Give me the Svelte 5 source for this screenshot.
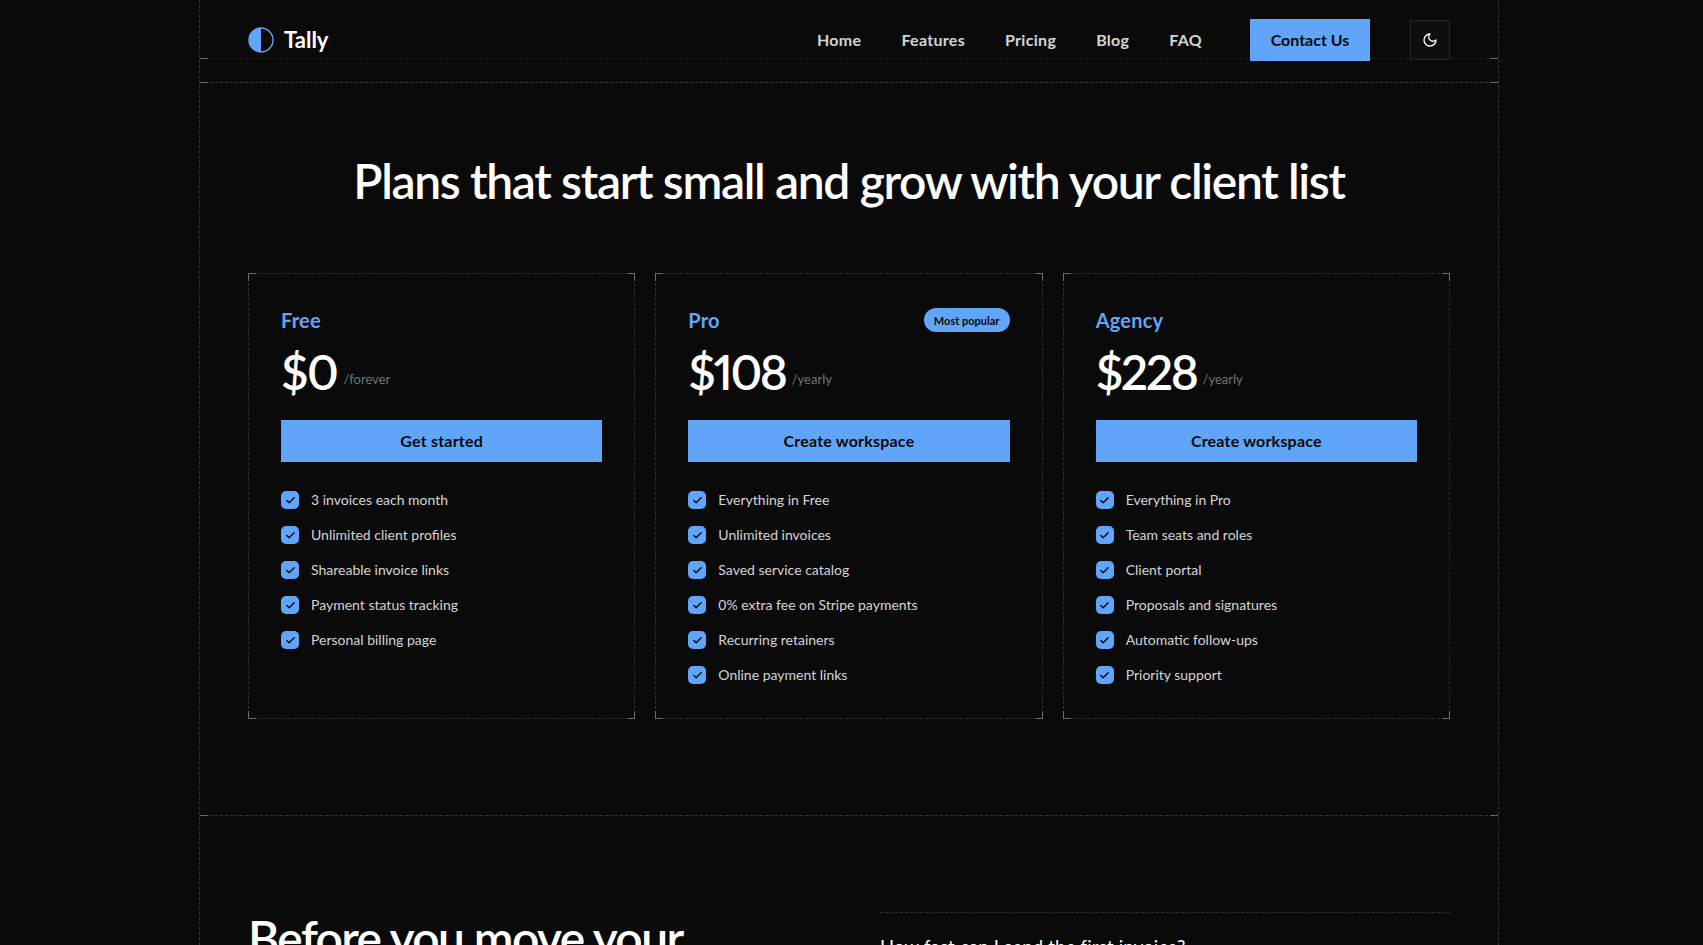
<script>
  const plans = [
    { name: 'Free', price: '$0', per: '/forever', cta: 'Get started', items: ['3 invoices each month', 'Unlimited client profiles', 'Shareable invoice links', 'Payment status tracking', 'Personal billing page'] },
    { name: 'Pro', price: '$108', per: '/yearly', cta: 'Create workspace', badge: 'Most popular', items: ['Everything in Free', 'Unlimited invoices', 'Saved service catalog', '0% extra fee on Stripe payments', 'Recurring retainers', 'Online payment links'] },
    { name: 'Agency', price: '$228', per: '/yearly', cta: 'Create workspace', items: ['Everything in Pro', 'Team seats and roles', 'Client portal', 'Proposals and signatures', 'Automatic follow-ups', 'Priority support'] }
  ];
  const links = ['Home', 'Features', 'Pricing', 'Blog', 'FAQ'];
</script>

<div class="page">
  <header class="head">
    <nav class="nav">
      <a class="brand" href="#top">
        <svg class="logo" viewBox="0 0 26 26" aria-hidden="true">
          <circle cx="13" cy="13" r="12" fill="none" stroke="#60a5fa" stroke-width="1.4" />
          <path d="M13 1a12 12 0 0 0 0 24z" fill="#60a5fa" />
        </svg>
        <span>Tally</span>
      </a>
      <div class="links">
        {#each links as l}<a href="#top">{l}</a>{/each}
      </div>
      <a class="contact" href="#top">Contact Us</a>
      <button class="theme" aria-label="Theme">
        <svg viewBox="0 0 24 24" width="16" height="16" fill="none" stroke="#fafafa" stroke-width="2" stroke-linecap="round" stroke-linejoin="round"><path d="M12 3a6 6 0 0 0 9 9 9 9 0 1 1-9-9Z" /></svg>
      </button>
    </nav>
    <i class="rule"></i>
    <i class="cross cl top58"></i><i class="cross cr top58"></i>
    <i class="mark tl"></i><i class="mark tr"></i>
  </header>

  <section class="pricing">
    <h1>Plans that start small and grow with your client list</h1>
    <div class="cards">
      {#each plans as p}
        <article class="card">
          <i class="c a"></i><i class="c b"></i><i class="c d"></i><i class="c e"></i>
          <div class="top">
            <h2>{p.name}</h2>
            {#if p.badge}<span class="badge">{p.badge}</span>{/if}
          </div>
          <div class="price"><strong class:wide={p.price === '$0'}>{p.price}</strong><span>{p.per}</span></div>
          <a class="cta" href="#top">{p.cta}</a>
          <ul>
            {#each p.items as it}
              <li>
                <span class="check">
                  <svg viewBox="0 0 24 24" width="11" height="11" fill="none" stroke="#0a0a0a" stroke-width="3" stroke-linecap="round" stroke-linejoin="round"><path d="M20 6 9 17l-5-5" /></svg>
                </span>
                {it}
              </li>
            {/each}
          </ul>
        </article>
      {/each}
    </div>
    <i class="cross cl bottom"></i><i class="cross cr bottom"></i>
  </section>

  <section class="faq">
    <h2 class="faqh">Before you move your<br />client billing</h2>
    <div class="q"><p>How fast can I send the first invoice?</p></div>
  </section>
</div>

<style>
  :global(html), :global(body) { background: #0a0a0a; overflow: hidden; }
  .page {
    box-sizing: border-box;
    width: 1300px;
    height: 945px;
    margin-left: 199px;
    border-left: 1px dashed #333;
    border-right: 1px dashed #333;
    overflow: hidden;
    position: relative;
    font-family: Lato, "Noto Sans", sans-serif;
    color: #fafafa;
  }
  .head { position: relative; height: 83px; box-sizing: border-box; border-bottom: 1px dashed #3a3a3a; }
  .nav {
    box-sizing: border-box;
    height: 82px;
    display: flex;
    align-items: center;
    padding: 0 48px 2px;
    position: relative;
    z-index: 1;
  }
  .rule { position: absolute; left: 0; right: 0; top: 58px; border-top: 1px dashed #1e1e1e; }
  a { text-decoration: none; color: inherit; }
  .brand { display: flex; align-items: center; gap: 10px; font-size: 22px; font-weight: 700; margin-right: auto; color: #fff; }
  .brand span { padding-bottom: 2px; }
  .logo { width: 26px; height: 26px; }
  .links { display: flex; gap: 40px; font-size: 16px; font-weight: 700; letter-spacing: 0.3px; color: #d4d4d4; margin-right: 48px; padding-bottom: 2px; }
  .contact {
    box-sizing: border-box; padding-bottom: 2px;
    background: #60a5fa; color: #0a0a0a; font-weight: 700; font-size: 16px;
    height: 42px; width: 120px; display: flex; align-items: center; justify-content: center;
    margin-right: 40px;
  }
  .theme {
    width: 40px; height: 40px; padding: 0; display: flex; align-items: center; justify-content: center;
    background: #0e0e0e; border: 1px solid #262626;
  }
  .mark { position: absolute; bottom: -1px; width: 8px; height: 9px; border-bottom: 1px solid #6a6a6a; }
  .tl { left: -1px; border-left: 1px solid #6a6a6a; }
  .tr { right: -1px; border-right: 1px solid #6a6a6a; }

  .pricing { position: relative; box-sizing: border-box; height: 733px; padding: 68px 48px 0; border-bottom: 1px dashed #333; }
  h1 { margin: 0; text-align: center; font-size: 48px; line-height: 60px; font-weight: 600; letter-spacing: -0.028em; color: #fff; }
  .cards { display: grid; grid-template-columns: repeat(3, 1fr); gap: 20px; margin-top: 62px; }
  .card { position: relative; box-sizing: border-box; height: 446px; padding: 32px; border: 1px dashed #2e2e2e; }
  .c { position: absolute; width: 7px; height: 7px; border: 0 solid #6a6a6a; }
  .a { top: -1px; left: -1px; border-width: 1px 0 0 1px; }
  .b { top: -1px; right: -1px; border-width: 1px 1px 0 0; }
  .d { bottom: -1px; left: -1px; border-width: 0 0 1px 1px; }
  .e { bottom: -1px; right: -1px; border-width: 0 1px 1px 0; }
  .top { display: flex; justify-content: space-between; align-items: center; height: 24px; margin-top: 2px; }
  .top h2 { margin: 0; font-size: 20px; font-weight: 700; letter-spacing: 0.2px; color: #60a5fa; }
  .badge { background: #60a5fa; color: #0a0a0a; font-size: 11px; font-weight: 700; border-radius: 12px; height: 24px; width: 86px; display: flex; align-items: center; justify-content: center; }
  .price { display: flex; align-items: center; gap: 6px; margin-top: 10px; height: 60px; }
  .price strong { font-size: 48px; line-height: 60px; font-weight: 600; letter-spacing: -0.05em; font-variant-numeric: proportional-nums; color: #fff; }
  .price strong.wide { letter-spacing: -0.03em; }
  .price span { font-size: 13px; color: #737373; padding-top: 14px; }
  .cta { box-sizing: border-box; padding-bottom: 2px; display: flex; align-items: center; justify-content: center; height: 42px; margin-top: 18px; background: #60a5fa; color: #0a0a0a; font-size: 16px; font-weight: 700; letter-spacing: 0.2px; }
  ul { list-style: none; margin: 27px 0 0; padding: 0; display: flex; flex-direction: column; gap: 13px; }
  li { display: flex; align-items: center; gap: 12px; font-size: 14px; line-height: 22px; color: #d4d4d4; }
  .check { width: 18px; height: 18px; border-radius: 5px; background: #60a5fa; display: flex; align-items: center; justify-content: center; }
  .cross { position: absolute; width: 8px; height: 16px; }
  .cross::before { content: ""; position: absolute; top: 8px; left: 0; width: 8px; border-top: 1px solid #666; }
  .top58 { top: 50px; }
  .bottom { bottom: -8px; }
  .cl { left: -1px; border-left: 1px solid #666; }
  .cr { right: -1px; border-right: 1px solid #666; }

  .faq { display: grid; grid-template-columns: 1fr 570px; gap: 48px; padding: 96px 48px 0; }
  .faqh { margin: -4px 0 0; font-size: 48px; line-height: 60px; font-weight: 600; letter-spacing: -0.034em; color: #fff; }
  .q { border-top: 1px dashed #2e2e2e; padding-top: 20px; font-size: 18.5px; line-height: 28px; letter-spacing: 0.2px; color: #fafafa; }
  .q p { margin: 0; }
</style>
